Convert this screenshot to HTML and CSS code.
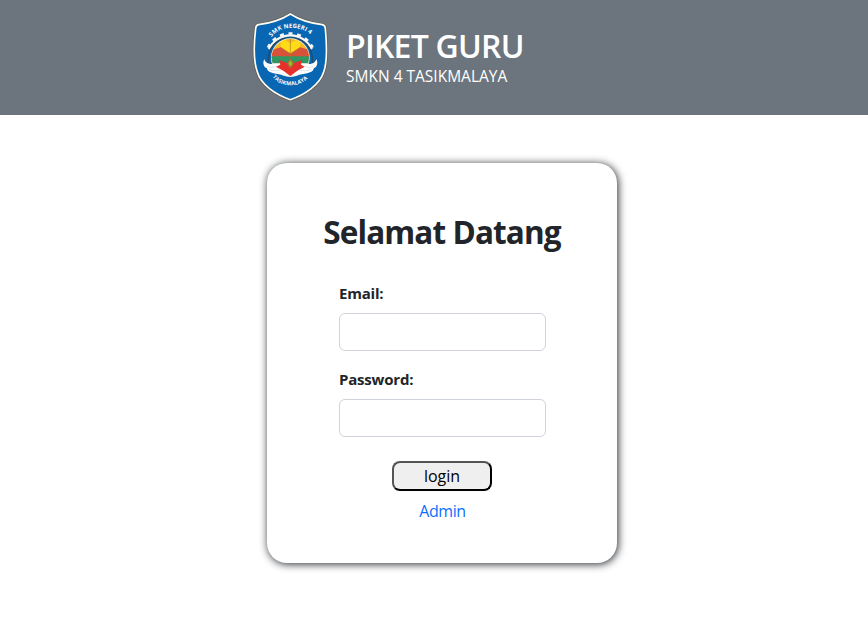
FILE: index.html
```html
<!DOCTYPE html>
<html lang="id">
<head>
<meta charset="utf-8">
<title>Piket Guru</title>
<link rel="stylesheet" href="styles.css">
</head>
<body>
<header class="header">
  <svg class="logo" viewBox="0 0 270 312" aria-hidden="true">
    <defs>
      <path id="arc-top" d="M80 96 C104 61 168 59 202 93"/>
      <path id="arc-bottom" d="M83 215 C106 249 165 249 190 218"/>
      <clipPath id="disc"><circle cx="136" cy="158" r="56"/></clipPath>
    </defs>
    <path d="M136 27 C161 43 190 54 232 59 Q240 61 241 70 C245 112 249 165 236 201 C224 240 179 269 136 284 C93 269 48 240 37 201 C24 165 27 112 32 70 Q33 61 40 59 C82 54 111 43 136 27Z" fill="#0966b2" stroke="#5b564b" stroke-width="9"/>
    <path d="M136 27 C161 43 190 54 232 59 Q240 61 241 70 C245 112 249 165 236 201 C224 240 179 269 136 284 C93 269 48 240 37 201 C24 165 27 112 32 70 Q33 61 40 59 C82 54 111 43 136 27Z" fill="#0966b2" stroke="#fffdf3" stroke-width="5"/>
    <path d="M72 133 A70 70 0 0 1 200 133" fill="none" stroke="#f7f7f5" stroke-width="7"/>
    <path d="M69 128 A74 74 0 0 1 203 128" fill="none" stroke="#f7f7f5" stroke-width="8" stroke-dasharray="12 14"/>
    <path d="M70 174 C67 128 93 99 136 99 S205 128 202 174" fill="none" stroke="#294862" stroke-width="4"/>
    <circle cx="136" cy="158" r="58" fill="#f5f3e9"/>
    <g clip-path="url(#disc)">
      <path d="M70 95H204V160H70Z" fill="#f6b923"/>
      <path d="M107 98 L136 115 L166 98V133L136 145L107 133Z" fill="#ffdb18"/>
      <path d="M70 138 L107 127 L136 146 L166 127 L204 138V158H70Z" fill="#d85239"/>
      <path d="M70 154H204V176H70Z" fill="#329662"/>
      <path d="M79 175H195V220H79Z" fill="#f5f5f2"/>
      <path d="M136 101V158M107 127L136 146L166 127" fill="none" stroke="#a7792e" stroke-width="2"/>
    </g>
    <path d="M58 163 C63 178 78 179 99 177 C115 180 122 191 129 204 L119 199 L124 209 L108 200 L111 209 C86 207 65 201 66 190 C56 188 52 172 58 163Z" fill="#fff"/>
    <path d="M214 163 C209 178 194 179 173 177 C157 180 150 191 143 204 L153 199 L148 209 L164 200 L161 209 C186 207 207 201 206 190 C216 188 220 172 214 163Z" fill="#fff"/>
    <path d="M103 165 L126 174 L136 161 L147 174 L170 165 L168 179 L179 185 L156 198 L136 213 L116 198 L93 185 L106 179Z" fill="#e4312c"/>
    <path d="M136 161 L147 176 L136 190 L126 176Z" fill="#a77b2c"/>
    <path d="M136 166L142 176L136 184L131 176Z" fill="#8fc13b"/>
    <path d="M67 184 Q80 190 92 185M73 194Q90 200 108 196M205 184Q192 190 180 185M199 194Q182 200 164 196" fill="none" stroke="#c9d6df" stroke-width="2"/>
    <text class="logo-text logo-text-top"><textPath href="#arc-top">SMK NEGERI 4</textPath></text>
    <text class="logo-text logo-text-bottom"><textPath href="#arc-bottom">TASIKMALAYA</textPath></text>
  </svg>
  <div class="brand">
    <h1 class="brand-title">PIKET GURU</h1>
    <p class="brand-school">SMKN 4 TASIKMALAYA</p>
  </div>
</header>
<main class="card">
  <h2 class="welcome">Selamat Datang</h2>
  <form class="form">
    <label class="label" for="email">Email:</label>
    <input class="input" id="email" type="email">
    <label class="label label-password" for="password">Password:</label>
    <input class="input" id="password" type="password">
    <button class="login" type="button">login</button>
    <a class="admin" href="#">Admin</a>
  </form>
</main>
</body>
</html>
```
FILE: styles.css
```css
* {
  box-sizing: border-box;
}

body {
  min-height: 100vh;
  margin: 0;
  background: #fff;
  color: #212529;
  font-family: "Segoe UI", "Open Sans", "Noto Sans", sans-serif;
  font-size: 16px;
  line-height: 24px;
}

.header {
  display: flex;
  height: 115px;
  padding: 5px 0 0 245px;
  background: #6c757d;
  color: #fff;
}

.logo {
  width: 90px;
  height: 104px;
  flex: none;
}

.logo-text {
  fill: #fff;
  font-weight: 700;
}

.logo-text-top {
  font-size: 18px;
  letter-spacing: 0.4px;
}

.logo-text-bottom {
  font-size: 16px;
  letter-spacing: 0.6px;
}

.brand {
  padding: 22px 0 0 11px;
  white-space: nowrap;
}

.brand-title {
  margin: 0;
  font-size: 32px;
  font-weight: 600;
  line-height: 38px;
  letter-spacing: -0.75px;
}

.brand-school {
  margin: -1px 0 0;
  font-size: 15.5px;
}

.card {
  width: 350px;
  height: 400px;
  margin: 48px 0 0 267px;
  padding-top: 49px;
  border-radius: 20px;
  background: #fff;
  box-shadow: 1px 1px 9px #212529;
}

.welcome {
  margin: 0;
  font-size: 31.5px;
  font-weight: 700;
  line-height: 40px;
  text-align: center;
  letter-spacing: -0.9px;
  white-space: nowrap;
}

.form {
  display: flex;
  flex-direction: column;
  width: 207px;
  margin: 29px 0 0 72px;
}

.label {
  margin-bottom: 8px;
  font-size: 15px;
  font-weight: 700;
  letter-spacing: -0.2px;
}

.label-password {
  margin-top: 16px;
}

.input {
  width: 207px;
  height: 38px;
  padding: 6px 12px;
  border: 1px solid #ced4da;
  border-radius: 6px;
  background: #fff;
  font: inherit;
}

.login {
  width: 100px;
  height: 30px;
  margin: 24px 0 0 53px;
  padding: 0;
  border: 2px outset #000;
  border-radius: 8px;
  background: #efefef;
  color: #000;
  font: inherit;
}

.admin {
  align-self: center;
  margin-top: 8px;
  color: #0d6efd;
  letter-spacing: -0.4px;
  text-decoration: none;
}
```
